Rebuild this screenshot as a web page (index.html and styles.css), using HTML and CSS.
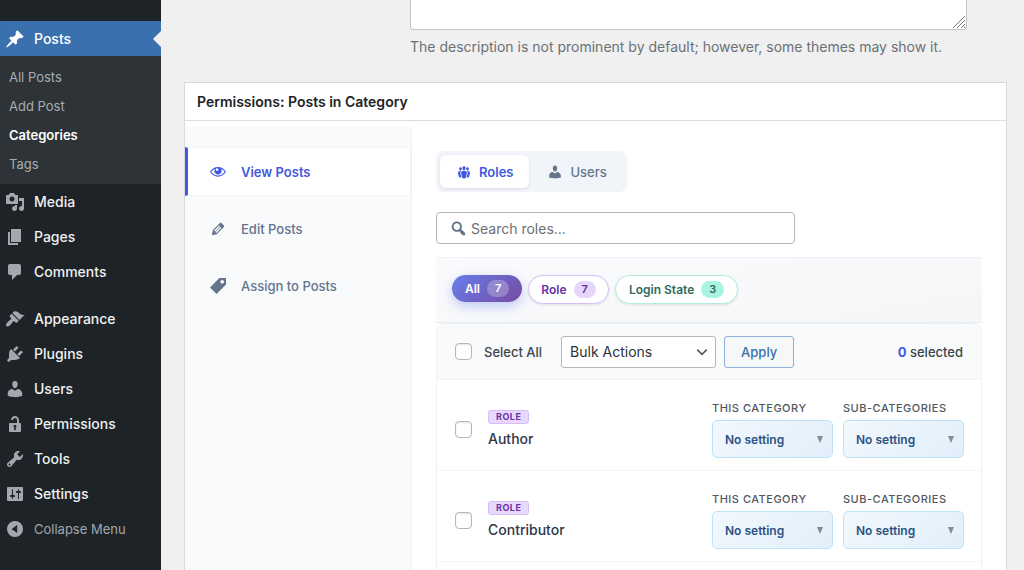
FILE: index.html
```html
<!DOCTYPE html>
<html lang="en">
<head>
<meta charset="utf-8">
<title>Categories</title>
<link rel="stylesheet" href="styles.css">
</head>
<body>
<div class="app">
  <nav class="sidebar" aria-label="Main menu">
    <a class="menu-item current" href="#"><svg class="icon" viewBox="0 0 20 20"><path d="M10.44 3.02l1.82-1.82 6.36 6.35-1.83 1.82c-1.05-.68-2.48-.57-3.41.36l-.75.75c-.92.93-1.04 2.35-.35 3.41l-1.83 1.82-2.41-2.41-2.8 2.79c-.42.42-3.38 2.71-3.8 2.29s1.86-3.39 2.28-3.81l2.79-2.79L4.1 9.36l1.83-1.82c1.05.69 2.48.57 3.4-.36l.75-.75c.93-.92 1.05-2.35.36-3.41z"/></svg>Posts</a>
    <div class="submenu">
      <a href="#">All Posts</a>
      <a href="#">Add Post</a>
      <a class="active" href="#">Categories</a>
      <a href="#">Tags</a>
    </div>
    <a class="menu-item" href="#"><svg class="icon" viewBox="0 0 20 20"><path d="M13 11V4c0-.55-.45-1-1-1h-1.67L9 1H5L3.67 3H2c-.55 0-1 .45-1 1v7c0 .55.45 1 1 1h10c.55 0 1-.45 1-1zM7 4.5c1.38 0 2.5 1.12 2.5 2.5S8.38 9.5 7 9.5 4.5 8.38 4.5 7 5.62 4.5 7 4.5zM14 6h5v10.5c0 1.38-1.12 2.5-2.5 2.5S14 17.88 14 16.5s1.12-2.5 2.5-2.5c.17 0 .34.02.5.05V9h-3V6zm-4 8.05V13h2v3.5c0 1.38-1.12 2.5-2.5 2.5S7 17.88 7 16.5 8.12 14 9.5 14c.17 0 .34.02.5.05z"/></svg>Media</a>
    <a class="menu-item" href="#"><svg class="icon" viewBox="0 0 20 20"><path d="M6 15V2h10v13H6zm-1 1h8v2H3V5h2v11z"/></svg>Pages</a>
    <a class="menu-item" href="#"><svg class="icon" viewBox="0 0 20 20"><path d="M5 2h9c1.1 0 2 .9 2 2v7c0 1.1-.9 2-2 2h-2l-5 5v-5H5c-1.1 0-2-.9-2-2V4c0-1.1.9-2 2-2z"/></svg>Comments</a>
    <a class="menu-item group-start" href="#"><svg class="icon" viewBox="0 0 20 20"><path d="M14.48 11.06L7.41 3.99l1.5-1.5c.5-.56 2.3-.47 3.51.32 1.21.8 1.43 1.28 2.91 2.1 1.18.64 2.45 1.26 4.45.85zm-.71.71L6.7 4.7 4.93 6.47c-.39.39-.39 1.02 0 1.41l1.06 1.06c.39.39.39 1.03 0 1.42-.6.6-1.43 1.11-2.21 1.69-.35.26-.7.53-1.01.84C1.43 14.23.4 16.08 1.4 17.07c.99 1 2.84-.03 4.18-1.36.31-.31.58-.66.85-1.02.57-.78 1.08-1.61 1.69-2.21.39-.39 1.02-.39 1.41 0l1.06 1.06c.39.39 1.02.39 1.41 0z"/></svg>Appearance</a>
    <a class="menu-item" href="#"><svg class="icon" viewBox="0 0 20 20"><path d="M13.11 4.36L9.87 7.6 8 5.73l3.24-3.24c.35-.34 1.05-.2 1.56.32.52.51.66 1.21.31 1.55zm-8 1.77l.91-1.12 9.01 9.01-1.19.84c-.71.71-2.63 1.16-3.82 1.16H6.14L4.9 17.26c-.59.59-1.54.59-2.12 0-.59-.58-.59-1.53 0-2.12l1.24-1.24v-3.88c0-1.13.4-3.19 1.09-3.89zm7.26 3.97l3.24-3.24c.34-.35 1.04-.21 1.55.31.52.51.66 1.21.31 1.55l-3.24 3.25z"/></svg>Plugins</a>
    <a class="menu-item" href="#"><svg class="icon" viewBox="0 0 20 20"><path d="M10 9.25c-2.27 0-2.73-3.44-2.73-3.44C7 4.02 7.82 2 9.97 2c2.16 0 2.98 2.02 2.71 3.81 0 0-.41 3.44-2.68 3.44zm0 2.57L12.72 10c2.39 0 4.52 2.33 4.52 4.53v2.49s-3.65 1.13-7.24 1.13c-3.65 0-7.24-1.13-7.24-1.13v-2.49c0-2.25 1.94-4.48 4.47-4.48z"/></svg>Users</a>
    <a class="menu-item" href="#"><svg class="icon" viewBox="0 0 20 20"><path d="M12 9V6c0-1.1-.9-2-2-2s-2 .9-2 2H6c0-2.21 1.79-4 4-4s4 1.79 4 4v3h1c.55 0 1 .45 1 1v7c0 .55-.45 1-1 1H5c-.55 0-1-.45-1-1v-7c0-.55.45-1 1-1h7zm-1 7l-.36-2.15c.51-.24.86-.75.86-1.35 0-.83-.67-1.5-1.5-1.5s-1.5.67-1.5 1.5c0 .6.35 1.11.86 1.35L9 16h2z"/></svg>Permissions</a>
    <a class="menu-item" href="#"><svg class="icon" viewBox="0 0 20 20"><path d="M16.68 9.77c-1.34 1.34-3.3 1.67-4.95.99l-5.41 6.52c-.99.99-2.59.99-3.58 0s-.99-2.59 0-3.57l6.52-5.42c-.68-1.65-.35-3.61.99-4.95 1.28-1.28 3.12-1.62 4.72-1.06l-2.89 2.89 2.82 2.82 2.86-2.87c.53 1.58.18 3.39-1.08 4.65zM3.81 16.21c.4.39 1.04.39 1.43 0 .4-.4.4-1.04 0-1.43-.39-.4-1.03-.4-1.43 0-.39.39-.39 1.03 0 1.43z"/></svg>Tools</a>
    <a class="menu-item" href="#"><svg class="icon" viewBox="0 0 20 20"><path d="M18 16V4c0-.55-.45-1-1-1H3c-.55 0-1 .45-1 1v12c0 .55.45 1 1 1h14c.55 0 1-.45 1-1zM8 11h1c.55 0 1 .45 1 1s-.45 1-1 1H8v1.5c0 .28-.22.5-.5.5s-.5-.22-.5-.5V13H6c-.55 0-1-.45-1-1s.45-1 1-1h1V5.5c0-.28.22-.5.5-.5s.5.22.5.5V11zm5-2h-1c-.55 0-1-.45-1-1s.45-1 1-1h1V5.5c0-.28.22-.5.5-.5s.5.22.5.5V7h1c.55 0 1 .45 1 1s-.45 1-1 1h-1v5.5c0 .28-.22.5-.5.5s-.5-.22-.5-.5V9z"/></svg>Settings</a>
    <button class="menu-item collapse" type="button"><svg class="icon" viewBox="0 0 20 20"><path fill-rule="evenodd" d="M10 2a8 8 0 1 1 0 16 8 8 0 0 1 0-16zm2.2 4L6.6 10l5.6 4z"/></svg>Collapse Menu</button>
  </nav>

  <main class="content">
    <div class="description-field">
      <div class="textarea-wrap">
        <textarea class="description" aria-label="Description" aria-describedby="description-help"></textarea>
        <svg class="grip" viewBox="0 0 14 14"><path d="M1 13L13 1M5 13l8-8M9 13l4-4M12 13l1-1"/></svg>
      </div>
      <p class="help" id="description-help">The description is not prominent by default; however, some themes may show it.</p>
    </div>

    <section class="postbox">
      <h2 class="postbox-title">Permissions: Posts in Category</h2>
      <div class="permissions">
        <div class="operations">
          <button class="operation active" type="button"><svg class="icon-small" viewBox="0 0 20 20"><path fill-rule="evenodd" d="M10 3.600c4.200 0 7.800 2.300 10 6.100-2.200 3.800-5.800 6.100-10 6.100S2.200 13.500 0 9.700C2.200 5.900 5.800 3.600 10 3.600zM6.200 5.800C4.300 6.600 2.800 7.900 1.600 9.700c1.900 2.900 4.900 4.700 8.400 4.700s6.500-1.800 8.400-4.700c-1.200-1.800-2.700-3.100-4.600-3.900.5.800.8 1.700.8 2.700 0 2.600-2 4.600-4.600 4.600S5.400 11.100 5.400 8.500c0-1 .3-1.900.8-2.700zM8.600 5.300a1.700 1.700 0 1 0 1.700 2.600 1.700 1.700 0 0 0-1.700-2.600z"/></svg>View Posts</button>
          <button class="operation" type="button"><svg class="icon-small" viewBox="1 1 18 18"><path d="M13.89 3.39l2.71 2.72c.46.46.42 1.24.03 1.64l-8.01 8.02-5.56 1.16 1.16-5.58s7.6-7.63 7.99-8.03c.39-.39 1.22-.39 1.68.07zm-2.73 2.79l-5.59 5.61 1.11 1.11 5.54-5.65zm-2.97 8.23l5.58-5.6-1.07-1.08-5.59 5.6z"/></svg>Edit Posts</button>
          <button class="operation" type="button"><svg class="icon-small" viewBox="1 2 17 17"><path d="M11 2h7v7L8 19l-7-7zm3 6c1.100 0 2-.9 2-2s-.9-2-2-2-2 .9-2 2 .9 2 2 2z"/></svg>Assign to Posts</button>
        </div>

        <div class="panel">
          <div class="tabs">
            <button class="tab active" type="button"><svg class="icon-small" viewBox="0 0 20 20"><path d="M8.03 4.46c-.29 1.28.55 3.46 1.97 3.46 1.41 0 2.25-2.18 1.96-3.46-.22-.98-1.08-1.63-1.96-1.63-.89 0-1.74.65-1.97 1.63zm-4.13.9c-.25 1.08.47 2.93 1.67 2.93s1.92-1.85 1.67-2.93c-.19-.83-.92-1.39-1.67-1.39s-1.48.56-1.67 1.39zm8.86 0c-.25 1.08.47 2.93 1.66 2.93 1.2 0 1.92-1.85 1.67-2.93-.19-.83-.92-1.39-1.67-1.39-.74 0-1.47.56-1.66 1.39zm-.59 11.43l1.25-4.3C14.2 10 12.71 8.47 10 8.47c-2.72 0-4.21 1.53-3.44 4.02l1.26 4.3C8.05 17.51 9 18 10 18c.98 0 1.94-.49 2.17-1.21zm-6.1-7.63c-.49.67-.96 1.83-.42 3.59l1.12 3.79c-.34.2-.77.31-1.2.31-.85 0-1.65-.41-1.85-1.03l-1.07-3.65c-.65-2.11.61-3.4 2.92-3.4.27 0 .54.02.79.06-.1.1-.2.22-.29.33zm8.35-.39c2.31 0 3.58 1.29 2.92 3.4l-1.07 3.65c-.2.62-1 1.03-1.85 1.03-.43 0-.86-.11-1.2-.31l1.11-3.77c.55-1.78.08-2.94-.42-3.61-.08-.11-.18-.23-.28-.33.25-.04.51-.06.79-.06z"/></svg>Roles</button>
            <button class="tab" type="button"><svg class="icon-small" viewBox="0 0 20 20"><path d="M10 9.25c-2.27 0-2.73-3.44-2.73-3.44C7 4.02 7.82 2 9.97 2c2.16 0 2.98 2.02 2.71 3.81 0 0-.41 3.44-2.68 3.44zm0 2.57L12.72 10c2.39 0 4.52 2.33 4.52 4.53v2.49s-3.65 1.13-7.24 1.13c-3.65 0-7.24-1.13-7.24-1.13v-2.49c0-2.25 1.94-4.48 4.47-4.48z"/></svg>Users</button>
          </div>

          <label class="search">
            <svg class="icon-small" viewBox="1 1 17 17"><path d="M12.14 4.18c1.87 1.87 2.11 4.75.72 6.89.12.1.22.21.36.31.2.16.47.36.81.59.34.24.56.39.66.47.42.31.73.57.94.78.32.32.6.65.84 1 .25.35.44.69.59 1.04.14.35.21.68.18 1-.02.32-.14.59-.36.81s-.49.34-.81.36c-.31.02-.65-.04-.99-.19-.35-.14-.7-.34-1.04-.59-.35-.24-.68-.52-1-.84-.21-.21-.47-.52-.77-.93-.1-.13-.25-.35-.47-.66-.22-.32-.4-.57-.56-.78-.16-.2-.29-.35-.44-.5-2.07 1.09-4.69.76-6.44-.98-2.14-2.15-2.14-5.64 0-7.78 2.15-2.15 5.63-2.15 7.78 0zm-1.41 6.36c1.36-1.37 1.36-3.58 0-4.95-1.37-1.37-3.59-1.37-4.95 0-1.37 1.37-1.37 3.58 0 4.95 1.36 1.37 3.58 1.37 4.95 0z"/></svg>
            <input type="text" placeholder="Search roles..." aria-label="Search roles">
          </label>

          <div class="filters">
            <button class="chip all" type="button">All <span class="count">7</span></button>
            <button class="chip role" type="button">Role <span class="count">7</span></button>
            <button class="chip login" type="button">Login State <span class="count">3</span></button>
          </div>

          <div class="list">
            <div class="bulk">
              <label class="select-all"><input class="check" type="checkbox">Select All</label>
              <span class="bulk-select">
                <select aria-label="Bulk Actions"><option>Bulk Actions</option></select>
                <svg class="chevron" viewBox="0 0 20 20"><path d="M4 7l6 6 6-6"/></svg>
              </span>
              <button class="apply" type="button">Apply</button>
              <span class="selected"><strong>0</strong> selected</span>
            </div>

            <div class="row">
              <input class="check" type="checkbox" id="author">
              <label class="identity" for="author"><span class="badge">Role</span><span class="name">Author</span></label>
              <label class="setting">This Category
                <span class="setting-select"><select><option>No setting</option></select></span>
              </label>
              <label class="setting">Sub-Categories
                <span class="setting-select"><select><option>No setting</option></select></span>
              </label>
            </div>
            <div class="row">
              <input class="check" type="checkbox" id="contributor">
              <label class="identity" for="contributor"><span class="badge">Role</span><span class="name">Contributor</span></label>
              <label class="setting">This Category
                <span class="setting-select"><select><option>No setting</option></select></span>
              </label>
              <label class="setting">Sub-Categories
                <span class="setting-select"><select><option>No setting</option></select></span>
              </label>
            </div>
            <div class="row"></div>
          </div>
        </div>
      </div>
    </section>
  </main>
</div>
</body>
</html>
```
FILE: styles.css
```css
* { box-sizing: border-box; }
body {
  margin: 0;
  background: #f0f0f0;
  color: #3c434a;
  font-family: Inter, "Liberation Sans", sans-serif;
  font-size: 14px;
}
button, input, select, textarea { font: inherit; color: inherit; margin: 0; }
button { border: 0; background: none; padding: 0; text-align: left; }
a { text-decoration: none; color: inherit; }
svg { display: block; flex: none; fill: currentColor; }

.app { display: flex; height: 100vh; overflow: hidden; }

/* Sidebar */
.sidebar {
  flex: none;
  width: 161px;
  padding-top: 21px;
  background: #1d2327;
  color: #f0f0f1;
}
.menu-item {
  position: relative;
  display: flex;
  align-items: center;
  gap: 9px;
  width: 100%;
  height: 35px;
  padding-left: 5px;
  font-size: 14px;
  font-weight: 500;
}
.icon { width: 20px; height: 20px; color: #a2a8ad; }
.menu-item.current { background: #3b70ae; color: #fff; }
.menu-item.current .icon { color: #fff; }
.menu-item.current::after {
  content: "";
  position: absolute;
  right: 0;
  top: 10px;
  border: 8px solid transparent;
  border-left-width: 0;
  border-right-color: #f0f0f0;
}
.menu-item.group-start { margin-top: 12px; }
.menu-item.collapse { color: #a2a8ad; font-size: 13px; font-weight: 400; }
.submenu { padding: 7px 0 5px; background: #2d3337; color: #a9aeb2; font-size: 13px; }
.submenu a { display: block; padding-left: 9px; line-height: 29px; }
.submenu .active { color: #fff; font-weight: 600; }

/* Description field */
.content { flex: 1; min-width: 0; padding: 0 17px 0 23px; }
.description-field { margin: 0 40px 0 226px; }
.textarea-wrap { position: relative; }
.description {
  display: block;
  width: 100%;
  height: 30px;
  border: 1px solid #c0c2c4;
  border-top: 0;
  border-radius: 0 0 4px 4px;
  background: #fff;
  resize: none;
}
.grip {
  position: absolute;
  right: 1px;
  bottom: 1px;
  width: 14px;
  height: 14px;
  fill: none;
  stroke: #777;
}
.help { margin: 7px 0 0; color: #6c7077; line-height: 20px; white-space: nowrap; }

/* Permissions box */
.postbox { margin-top: 25px; border: 1px solid #d8dadc; background: #fff; min-height: 100vh; }
.postbox-title {
  margin: 0;
  padding: 0 12px;
  border-bottom: 1px solid #dcdde0;
  color: #1d2327;
  font-size: 14px;
  font-weight: 600;
  line-height: 37px;
}
.permissions { display: flex; margin-top: 6px; min-height: 100vh; }
.operations {
  flex: none;
  display: flex;
  flex-direction: column;
  gap: 8px;
  width: 227px;
  padding-top: 20px;
  border-right: 1px solid #eef2f7;
  background: #f8fafc;
}
.operation {
  display: flex;
  align-items: center;
  gap: 15px;
  height: 49px;
  padding-left: 22px;
  border: 1px solid transparent;
  border-left: 3px solid transparent;
  color: #64748b;
  font-size: 13px;
  font-weight: 500;
}
.operation.active {
  border-color: #f1f5f9;
  border-left-color: #4158e0;
  background: #fff;
  color: #4158e0;
  font-weight: 600;
}
.icon-small { width: 16px; height: 16px; }
.panel { flex: 1; min-width: 0; padding: 24px 24px 0; }

/* Tabs and search */
.tabs {
  display: inline-flex;
  gap: 2px;
  padding: 4px;
  border-radius: 8px;
  background: #f1f5f9;
}
.tab {
  display: flex;
  align-items: center;
  gap: 7px;
  height: 33px;
  padding: 0 16px;
  border-radius: 6px;
  color: #64748b;
  font-size: 13px;
  font-weight: 500;
}
.tab.active {
  background: #fff;
  box-shadow: 0 1px 3px rgba(0, 0, 0, 0.1);
  color: #4158e0;
  font-weight: 600;
}
.search {
  display: flex;
  align-items: center;
  gap: 5px;
  width: 359px;
  max-width: 100%;
  height: 32px;
  margin-top: 20px;
  padding: 0 13px;
  border: 1px solid #b4b7ba;
  border-radius: 4px;
  color: #64748b;
}
.search input { flex: 1; min-width: 0; padding: 0; border: 0; outline: 0; background: none; }
.search input::placeholder { color: #6b7075; opacity: 1; }

/* Filter chips */
.filters {
  display: flex;
  align-items: flex-start;
  gap: 6px;
  margin-top: 13px;
  padding: 17px 16px 18px;
  border-top: 1px solid #f1f3f9;
  border-bottom: 1px solid #e9ebee;
  background: linear-gradient(170deg, #fafbfd, #f5f6f8);
}
.chip {
  display: flex;
  align-items: center;
  gap: 7px;
  height: 29px;
  padding: 0 12px;
  border: 1px solid;
  border-radius: 15px;
  background: #fff;
  box-shadow: 0 1px 3px rgba(0, 0, 0, 0.1);
  font-size: 12px;
  font-weight: 600;
}
.count { padding: 0 8px; border-radius: 9px; font-size: 11px; line-height: 17px; }
.chip.all {
  height: 27px;
  padding: 0 13px;
  border: 0;
  background: linear-gradient(135deg, #667eea, #764ba2);
  box-shadow: 0 4px 12px rgba(102, 126, 234, 0.4);
  color: #fff;
}
.chip.all .count { background: rgba(255, 255, 255, 0.25); }
.chip.role { border-color: #d6bcfa; color: #6b2fa8; }
.chip.role .count { background: #e6d6fb; }
.chip.login { padding: 0 13px; border-color: #b2ece0; color: #2f6b5d; }
.chip.login .count { background: #a9f3e2; }

/* Role list */
.list { border: 1px solid #eef1f6; border-radius: 8px 8px 0 0; overflow: hidden; background: #fff; }
.bulk {
  display: flex;
  align-items: center;
  height: 56px;
  padding: 0 18px;
  border-bottom: 1px solid #eff2f7;
  background: #f8fafc;
}
.check {
  appearance: none;
  flex: none;
  width: 17px;
  height: 17px;
  border: 1px solid #b4b7ba;
  border-radius: 4px;
  background: #fff;
  box-shadow: inset 0 1px 2px rgba(0, 0, 0, 0.1);
}
.select-all { display: flex; align-items: center; gap: 12px; font-size: 13px; font-weight: 500; }
.bulk-select { position: relative; margin-left: 19px; }
.bulk-select select {
  appearance: none;
  display: block;
  width: 155px;
  height: 32px;
  padding: 0 8px;
  border: 1px solid #b4b7ba;
  border-radius: 3px;
  background: #fff;
  color: #2c3338;
}
.chevron {
  position: absolute;
  right: 6px;
  top: 8px;
  width: 16px;
  height: 16px;
  fill: none;
  stroke: #50575e;
  stroke-width: 2;
  pointer-events: none;
}
.apply {
  height: 32px;
  margin-left: 8px;
  padding: 0 16px;
  border: 1px solid #8fb0d8;
  border-radius: 3px;
  background: #f6f7f7;
  color: #3b70ae;
  font-size: 13px;
  font-weight: 500;
}
.selected { margin-left: auto; font-size: 13px; font-weight: 500; }
.selected strong { color: #4158e0; font-weight: 700; }
.row {
  display: flex;
  align-items: center;
  padding: 20px 17px 12px 18px;
  border-bottom: 1px solid #f3f5f8;
}
.identity {
  display: flex;
  flex-direction: column;
  align-items: flex-start;
  gap: 5px;
  flex: 1;
  margin-left: 16px;
}
.badge {
  padding: 0 7px;
  border: 1px solid #d6bcfa;
  border-radius: 3px;
  background: #e9d8fd;
  color: #6b2fa8;
  font-size: 9px;
  font-weight: 700;
  line-height: 12px;
  letter-spacing: 0.5px;
  text-transform: uppercase;
}
.name { color: #2d3748; font-size: 14px; font-weight: 500; line-height: 20px; }
.setting {
  display: flex;
  flex-direction: column;
  gap: 3px;
  margin-left: 10px;
  color: #50575e;
  font-size: 11px;
  font-weight: 500;
  line-height: 17px;
  letter-spacing: 0.5px;
  text-transform: uppercase;
}
.setting-select { position: relative; letter-spacing: normal; text-transform: none; }
.setting-select select {
  appearance: none;
  display: block;
  width: 121px;
  height: 38px;
  padding: 0 12px;
  border: 1px solid #bee3f8;
  border-radius: 5px;
  background: linear-gradient(135deg, #f2f8fe, #e1effa);
  color: #2c5282;
  font-size: 12px;
  font-weight: 600;
}
.setting-select::after {
  content: "";
  position: absolute;
  right: 10px;
  top: 16px;
  border: 3px solid transparent;
  border-top: 7px solid #848c96;
  border-bottom: 0;
  pointer-events: none;
}
```
